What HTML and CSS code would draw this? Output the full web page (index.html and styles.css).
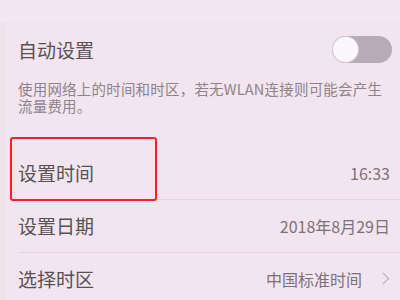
FILE: index.html
```html
<!DOCTYPE html>
<html lang="zh">
<head>
<meta charset="utf-8">
<link rel="stylesheet" href="styles.css">
</head>
<body>
<div class="screen">
  <div class="topband"></div>
  <div class="list">
    <div class="row auto">
      <span class="title">自动设置</span>
      <span class="toggle"><span class="knob"></span></span>
    </div>
    <p class="desc"><span class="line">使用网络上的时间和时区，若无WLAN连接则可能会产生</span><span class="line">流量费用。</span></p>
    <div class="row item sep">
      <span class="title">设置时间</span>
      <span class="value">16:33</span>
      <span class="highlight"></span>
    </div>
    <div class="row item sep">
      <span class="title">设置日期</span>
      <span class="value">2018年8月29日</span>
    </div>
    <div class="row item">
      <span class="title">选择时区</span>
      <span class="value">中国标准时间<svg class="chev" width="8" height="13" viewBox="0 0 8 13"><path d="M1 1 L6.5 6.5 L1 12" fill="none" stroke="#c2b6c0" stroke-width="1.3"/></svg></span>
    </div>
  </div>
</div>
</body>
</html>
```
FILE: styles.css
```css
html, body {
  margin: 0;
  padding: 0;
}
body {
  width: 400px;
  height: 300px;
  overflow: hidden;
  background: #f3e5ef;
  font-family: "Noto Sans CJK SC", "Noto Sans", sans-serif;
}
.screen {
  width: 400px;
  height: 300px;
  background: linear-gradient(90deg, #eee2eb 0, #eee2eb 5px, #f3e5ef 5px);
}
.topband {
  height: 22px;
  background: #f3e7f1;
}
.list {
  padding-left: 18px;
}
.row {
  display: flex;
  align-items: center;
  justify-content: space-between;
  position: relative;
}
.auto {
  height: 54px;
  padding-right: 8px;
}
.title {
  font-size: 19px;
  color: #575154;
  line-height: 1;
}
.toggle {
  width: 60px;
  height: 27px;
  border-radius: 14px;
  background: #b7abb6;
  display: flex;
  align-items: center;
  padding-left: 1px;
  box-sizing: border-box;
}
.knob {
  width: 25px;
  height: 25px;
  border-radius: 50%;
  background: #fbf7fa;
  box-shadow: 0 0 0 1px #d9cdd7;
}
.desc {
  margin: 6px 0 0 0;
  font-size: 14.5px;
  color: #8d8389;
  display: flex;
  flex-direction: column;
}
.line {
  display: block;
  height: 17px;
  line-height: 14px;
  letter-spacing: 0.2px;
}
.item {
  height: 52px;
  padding-right: 10px;
}
.desc + .item {
  margin-top: 30.5px;
}
.sep {
  border-bottom: 1px solid #e5d6e1;
}
.value {
  font-size: 16px;
  color: #7b7278;
  display: flex;
  align-items: center;
}
.chev {
  margin-left: 20px;
}
.highlight {
  position: absolute;
  left: -8px;
  top: -10px;
  width: 147px;
  height: 64px;
  border: 2px solid #ff1f24;
  border-radius: 3px;
  box-sizing: border-box;
}
```
